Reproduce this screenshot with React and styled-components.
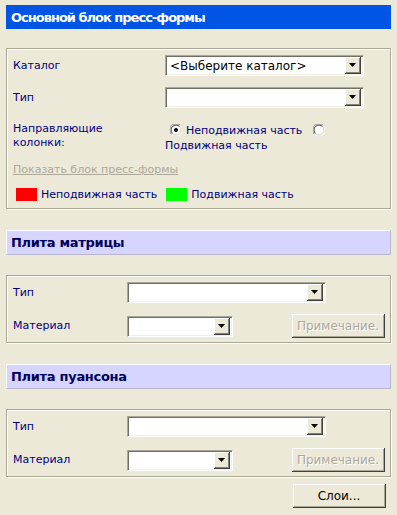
import React from "react";
import styled, { createGlobalStyle } from "styled-components";

const GlobalStyle = createGlobalStyle`
  html, body {
    margin: 0;
    padding: 0;
    background: #ece9d8;
  }
  body {
    font-family: "DejaVu Sans", Tahoma, sans-serif;
    font-size: 11px;
    color: #000080;
  }
`;

const Radio = ({ checked }) => (
  <RadioBox>
    <svg width="12" height="12" viewBox="0 0 12 12">
      <circle cx="6" cy="6" r="5.5" fill="#fff" />
      <path d="M1.5 10.5 A6 6 0 0 1 10.5 1.5" fill="none" stroke="#808080" strokeWidth="1" />
      <path d="M2.5 9.5 A4.6 4.6 0 0 1 9.5 2.5" fill="none" stroke="#404040" strokeWidth="1" />
      <path d="M10.5 1.5 A6 6 0 0 1 1.5 10.5" fill="none" stroke="#ffffff" strokeWidth="1" />
      <path d="M9.5 2.5 A4.6 4.6 0 0 1 2.5 9.5" fill="none" stroke="#d4d0c8" strokeWidth="1" />
      {checked && <circle cx="6" cy="6" r="2" fill="#000" />}
    </svg>
  </RadioBox>
);

const Select = ({ width, value }) => (
  <SelectBox $width={width}>
    <SelectText>{value}</SelectText>
    <DropButton>
      <svg width="7" height="4" viewBox="0 0 7 4">
        <path d="M0 0 H7 L3.5 4 Z" fill="#000" />
      </svg>
    </DropButton>
  </SelectBox>
);

const PlatePanel = () => (
  <Panel $pad="6px 5px 4px 6px">
    <PlateRow>
      <Label>Тип</Label>
      <Select width={199} />
    </PlateRow>
    <PlateRow $tall>
      <Label>Материал</Label>
      <Select width={106} />
      <Button disabled $width={93}>
        Примечание.
      </Button>
    </PlateRow>
  </Panel>
);

export default function App() {
  return (
    <Page>
      <GlobalStyle />
      <TitleBar>Основной блок пресс-формы</TitleBar>

      <Panel $pad="6px 6px 7px 6px" $top={19}>
        <FormRow>
          <Label>Каталог</Label>
          <Select width={199} value="<Выберите каталог>" />
        </FormRow>
        <FormRow $mt={11}>
          <Label>Тип</Label>
          <Select width={199} />
        </FormRow>
        <FormRow $mt={14} $start>
          <Label>
            Направляющие
            <br />
            колонки:
          </Label>
          <RadioGroup>
            <Radio checked />
            <RadioText>Неподвижная часть</RadioText>
            <Radio />
            <RadioText>Подвижная часть</RadioText>
          </RadioGroup>
        </FormRow>
        <ShowLink>Показать блок пресс-формы</ShowLink>
        <Legend>
          <Swatch $color="#ff0000" />
          <span>Неподвижная часть</span>
          <Swatch $color="#00ff00" $ml={5} />
          <span>Подвижная часть</span>
        </Legend>
      </Panel>

      <SubBar $top={21}>Плита матрицы</SubBar>
      <PlatePanel />

      <SubBar $top={21}>Плита пуансона</SubBar>
      <PlatePanel />

      <Footer>
        <Button $width={93}>Слои...</Button>
      </Footer>
    </Page>
  );
}

const Page = styled.div`
  width: 385px;
  padding: 5px 6px 7px 6px;
  display: flex;
  flex-direction: column;
`;

const TitleBar = styled.div`
  height: 24px;
  background: #0055e5;
  color: #fff;
  font-weight: bold;
  font-size: 13px;
  letter-spacing: -1px;
  display: flex;
  align-items: center;
  padding-left: 5px;
`;

const SubBar = styled.div`
  margin-top: ${(p) => p.$top || 20}px;
  height: 23px;
  background: #d5d5ff;
  border-top: 1px solid #ffffff;
  border-left: 1px solid #ffffff;
  border-bottom: 1px solid #b8b6c8;
  border-right: 1px solid #b8b6c8;
  color: #00005a;
  font-weight: bold;
  font-size: 13px;
  letter-spacing: -0.3px;
  display: flex;
  align-items: center;
  padding-left: 4px;
`;

const Panel = styled.div`
  margin-top: ${(p) => p.$top || 20}px;
  border: 1px solid #aca899;
  box-shadow: inset 1px 1px #ffffff, 1px 1px #ffffff;
  padding: ${(p) => p.$pad};
  display: flex;
  flex-direction: column;
`;

const FormRow = styled.div`
  display: grid;
  grid-template-columns: 152px auto;
  align-items: ${(p) => (p.$start ? "start" : "center")};
  margin-top: ${(p) => p.$mt || 0}px;
`;

const PlateRow = styled.div`
  display: grid;
  grid-template-columns: 114px auto 1fr;
  align-items: center;
  height: ${(p) => (p.$tall ? 24 : 21)}px;
  margin-top: ${(p) => (p.$tall ? 11 : 0)}px;

  & > button {
    justify-self: end;
  }
`;

const Label = styled.div`
  line-height: 14px;
  color: #000080;
`;

const SelectBox = styled.div`
  width: ${(p) => p.$width}px;
  height: 21px;
  box-sizing: border-box;
  background: #fff;
  border-top: 1px solid #aca899;
  border-left: 1px solid #aca899;
  border-right: 1px solid #ffffff;
  border-bottom: 1px solid #ffffff;
  box-shadow: inset 1px 1px #716f64, inset -1px -1px #f1efe2;
  display: flex;
  align-items: center;
  padding: 2px;
`;

const SelectText = styled.div`
  flex: 1;
  font-size: 12px;
  color: #000;
  padding-left: 2px;
  white-space: nowrap;
  overflow: hidden;
`;

const DropButton = styled.div`
  width: 16px;
  height: 17px;
  box-sizing: border-box;
  background: #ece9d8;
  border-right: 1px solid #404040;
  border-bottom: 1px solid #404040;
  box-shadow: inset 1px 1px #ffffff, inset -1px -1px #808080;
  display: flex;
  align-items: center;
  justify-content: center;
`;

const RadioGroup = styled.div`
  width: 199px;
  line-height: 15px;
  margin-top: 1px;
`;

const RadioBox = styled.span`
  display: inline-block;
  width: 12px;
  height: 12px;
  margin: 0 4px 0 5px;
  vertical-align: -2px;

  svg {
    display: block;
  }
`;

const RadioText = styled.span`
  margin-right: 6px;
`;

const ShowLink = styled.div`
  margin-top: 10px;
  line-height: 14px;
  color: #aca899;
  text-decoration: underline;
`;

const Legend = styled.div`
  margin-top: 11px;
  display: flex;
  align-items: center;
  height: 13px;
  padding-left: 3px;
  gap: 4px;
`;

const Swatch = styled.span`
  width: 21px;
  height: 13px;
  background: ${(p) => p.$color};
  margin-left: ${(p) => p.$ml || 0}px;
`;

const Button = styled.button`
  width: ${(p) => p.$width}px;
  height: 24px;
  box-sizing: border-box;
  background: #ece9d8;
  border: none;
  border-right: 1px solid #404040;
  border-bottom: 1px solid #404040;
  box-shadow: inset 1px 1px #ffffff, inset -1px -1px #aca899;
  font-family: "DejaVu Sans", Tahoma, sans-serif;
  font-size: 12px;
  color: #000;
  padding: 0;
  white-space: nowrap;
  overflow: hidden;

  &:disabled {
    color: #aca899;
    text-shadow: 1px 1px #ffffff;
  }
`;

const Footer = styled.div`
  margin-top: 7px;
  display: flex;
  justify-content: flex-end;
  padding-right: 5px;
`;
